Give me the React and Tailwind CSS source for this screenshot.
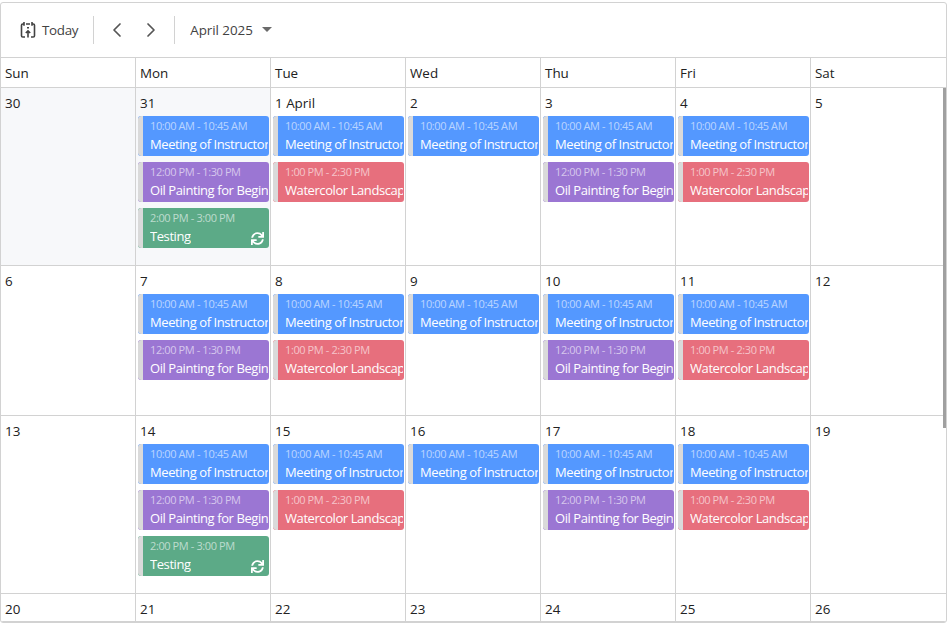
import React from "react";
import { ChevronLeft, ChevronRight } from "lucide-react";
import { FaSync } from "react-icons/fa";

const days = ["Sun", "Mon", "Tue", "Wed", "Thu", "Fri", "Sat"];

const meeting = { time: "10:00 AM - 10:45 AM", title: "Meeting of Instructors", color: "bg-[#5498ff]" };
const oil = { time: "12:00 PM - 1:30 PM", title: "Oil Painting for Beginners", color: "bg-[#9b76d3]" };
const water = { time: "1:00 PM - 2:30 PM", title: "Watercolor Landscapes", color: "bg-[#e76f7d]" };
const testing = { time: "2:00 PM - 3:00 PM", title: "Testing", color: "bg-[#5caa87]", repeat: true };

const weeks = [
  {
    height: "h-[178px]",
    cells: [
      { label: "30", muted: true, events: [] },
      { label: "31", muted: true, events: [meeting, oil, testing] },
      { label: "1 April", events: [meeting, water] },
      { label: "2", events: [meeting] },
      { label: "3", events: [meeting, oil] },
      { label: "4", events: [meeting, water] },
      { label: "5", events: [] },
    ],
  },
  {
    height: "h-[150px]",
    cells: [
      { label: "6", events: [] },
      { label: "7", events: [meeting, oil] },
      { label: "8", events: [meeting, water] },
      { label: "9", events: [meeting] },
      { label: "10", events: [meeting, oil] },
      { label: "11", events: [meeting, water] },
      { label: "12", events: [] },
    ],
  },
  {
    height: "h-[178px]",
    cells: [
      { label: "13", events: [] },
      { label: "14", events: [meeting, oil, testing] },
      { label: "15", events: [meeting, water] },
      { label: "16", events: [meeting] },
      { label: "17", events: [meeting, oil] },
      { label: "18", events: [meeting, water] },
      { label: "19", events: [] },
    ],
  },
  {
    height: "h-[28px]",
    cells: ["20", "21", "22", "23", "24", "25", "26"].map((label) => ({ label, events: [] })),
  },
];

function TodayIcon() {
  return (
    <svg width="18" height="18" viewBox="0 0 18 18" fill="none" stroke="#424242" strokeWidth="1.6">
      <path d="M5 3H3.8C3 3 2.5 3.5 2.5 4.3V14.7C2.5 15.5 3 16 3.8 16H6M12 16H14.2C15 16 15.5 15.5 15.5 14.7V4.3C15.5 3.5 15 3 14.2 3H13" />
      <path d="M5 1V4.8M13 1V4.8M7 3H11" />
      <path d="M9 16.5V10M6.8 12L9 9.8L11.2 12" />
      <path d="M8 6.7H10" />
    </svg>
  );
}

function Event({ event }) {
  return (
    <div className={`flex h-10 overflow-hidden rounded-[3px] ${event.color}`}>
      <div className="w-[5px] shrink-0 rounded-l-[3px] bg-[#dadada]" />
      <div className="min-w-0 flex-1 pl-[7px] pr-[1px]">
        <div className="h-[18px] truncate text-[11px] leading-[20px] tracking-[-0.4px] text-white/60">{event.time}</div>
        <div className="flex items-center justify-between">
          <div className="h-[22px] overflow-hidden whitespace-nowrap text-[13px] leading-[21px] tracking-[-0.42px] text-white">{event.title}</div>
          {event.repeat && <FaSync size={13} className="mr-[4px] mt-[3px] shrink-0 text-white" />}
        </div>
      </div>
    </div>
  );
}

export default function App() {
  return (
    <div className="pt-[2px] font-['Open_Sans','Noto_Sans',sans-serif] text-[#212121]">
      <div className="relative w-[947px] overflow-hidden rounded-[3px] border border-[#d2d2d2] bg-white">
        <div className="flex h-[54px] items-center">
          <div className="flex items-center gap-[5px] pl-[18px] pr-[15px]">
            <TodayIcon />
            <span className="text-[13.4px] tracking-[-0.3px] text-[#424242]">Today</span>
          </div>
          <div className="h-[28px] w-px bg-[#d2d2d2]" />
          <div className="flex items-center gap-[10px] pl-[11px] pr-[11px]">
            <ChevronLeft size={24} strokeWidth={1.7} className="text-[#555]" />
            <ChevronRight size={24} strokeWidth={1.7} className="text-[#555]" />
          </div>
          <div className="h-[28px] w-px bg-[#d2d2d2]" />
          <div className="flex items-center gap-[9px] pl-[15px]">
            <span className="text-[13.4px] tracking-[-0.05px] text-[#424242]">April 2025</span>
            <span className="h-0 w-0 border-x-[5px] border-t-[5px] border-x-transparent border-t-[#6a6a6a]" />
          </div>
        </div>
        <div className="grid grid-cols-[135px_135px_135px_135px_135px_135px_1fr] border-y border-[#d2d2d2]">
          {days.map((day) => (
            <div key={day} className="h-[29px] border-r border-[#d2d2d2] pl-1 text-[13.4px] leading-[31px] last:border-r-0">
              {day}
            </div>
          ))}
        </div>
        {weeks.map((week, i) => (
          <div
            key={i}
            className={`grid grid-cols-[135px_135px_135px_135px_135px_135px_1fr] border-b border-[#d2d2d2] last:border-b-0 ${week.height}`}
          >
            {week.cells.map((cell) => (
              <div
                key={cell.label}
                className={`border-r border-[#d2d2d2] last:border-r-0 ${cell.muted ? "bg-[#f7f8fa]" : ""}`}
              >
                <div className="h-[28px] pl-1 text-[13.4px] leading-[30px]">{cell.label}</div>
                <div className="flex flex-col gap-[6px] pl-[2px] pr-[1px]">
                  {cell.events.map((event, n) => (
                    <Event key={n} event={event} />
                  ))}
                </div>
              </div>
            ))}
          </div>
        ))}
        <div className="absolute right-0 top-[85px] h-[340px] w-[3px] bg-[#a0a0a0]" />
      </div>
    </div>
  );
}
